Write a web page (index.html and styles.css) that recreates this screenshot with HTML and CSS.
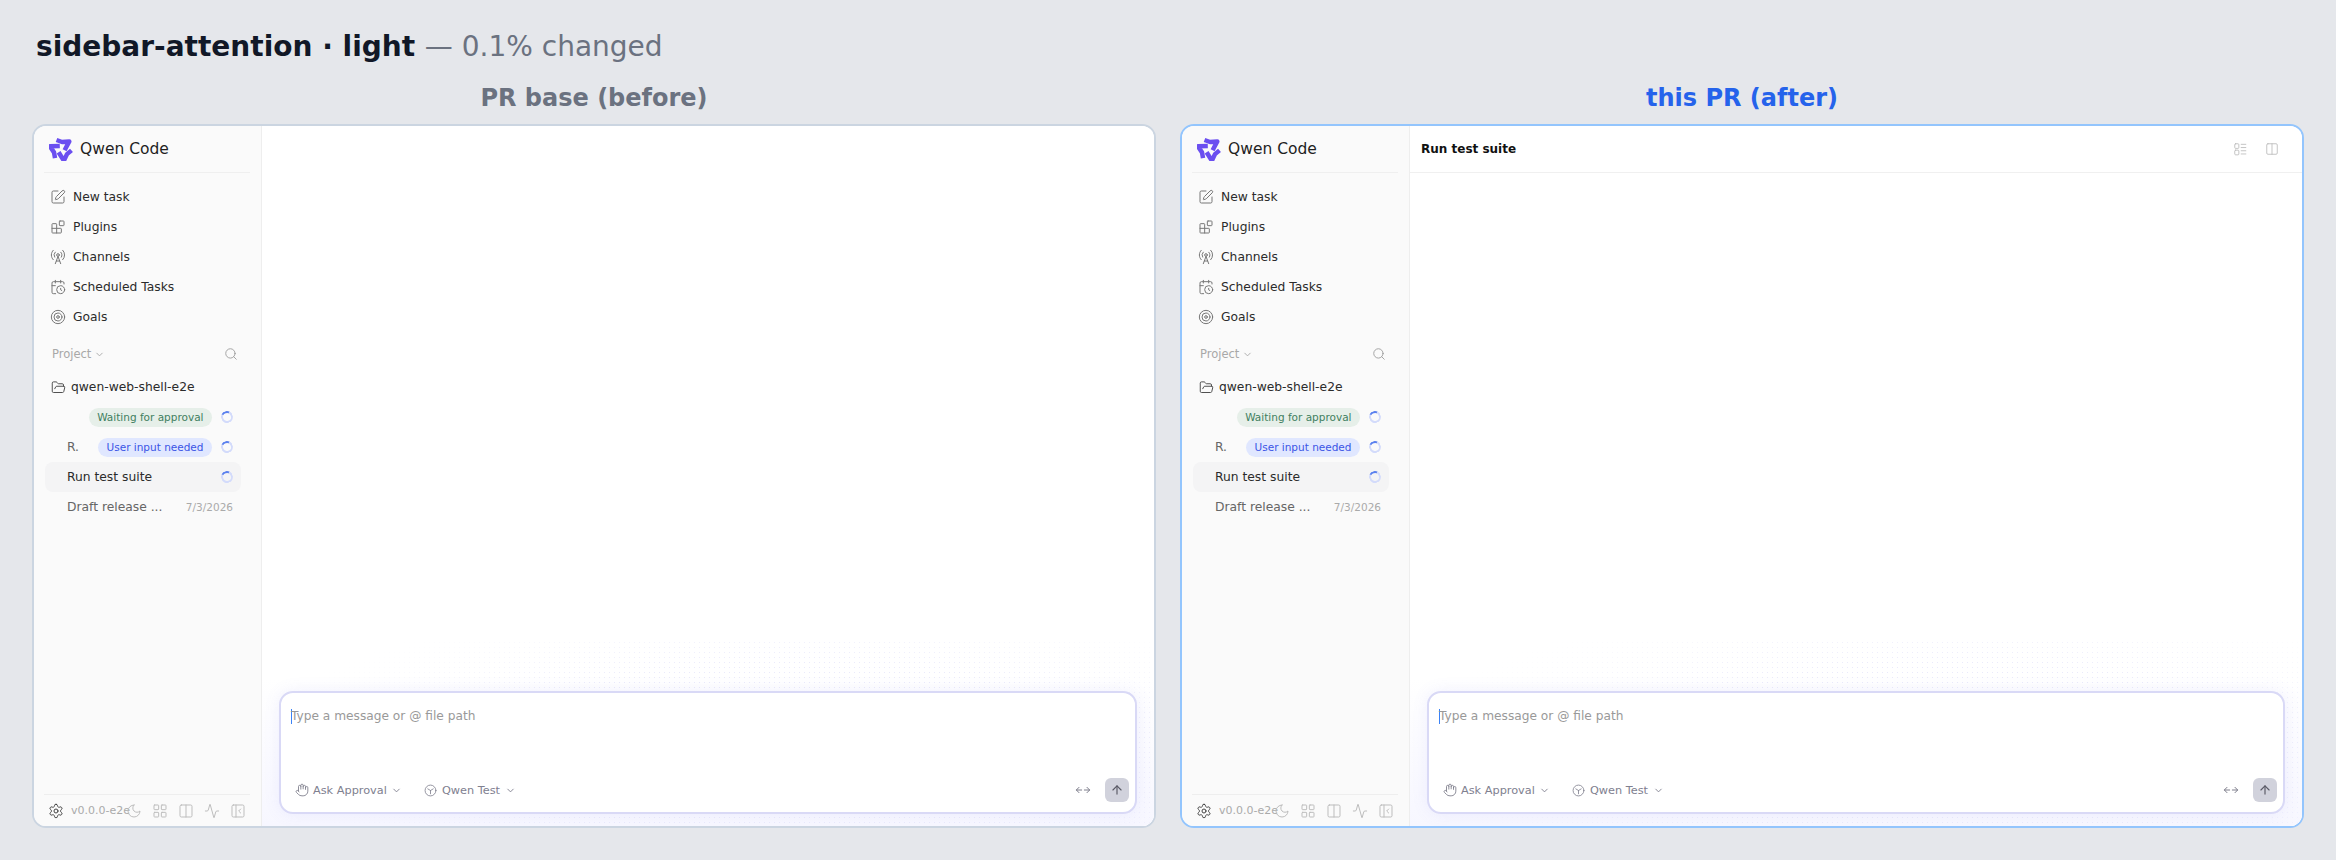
FILE: index.html
```html
<!DOCTYPE html>
<html lang="en">
<head>
<meta charset="utf-8">
<title>sidebar-attention · light</title>
<link rel="stylesheet" href="styles.css">
</head>
<body>
<svg class="sprite" aria-hidden="true">
  <defs>
    <symbol id="i-pen" viewBox="0 0 24 24"><path d="M12 3H5a2 2 0 0 0-2 2v14a2 2 0 0 0 2 2h14a2 2 0 0 0 2-2v-7"/><path d="M18.375 2.625a1 1 0 0 1 3 3l-9.013 9.014a2 2 0 0 1-.853.505l-2.873.84a.5.5 0 0 1-.62-.62l.84-2.873a2 2 0 0 1 .506-.852z"/></symbol>
    <symbol id="i-blocks" viewBox="0 0 24 24"><rect x="14" y="3" width="7" height="7" rx="1"/><path d="M10 21V8a1 1 0 0 0-1-1H4a1 1 0 0 0-1 1v12a1 1 0 0 0 1 1h12a1 1 0 0 0 1-1v-5a1 1 0 0 0-1-1H3"/></symbol>
    <symbol id="i-tower" viewBox="0 0 24 24"><path d="M4.9 16.1C1 12.2 1 5.8 4.9 1.9"/><path d="M7.8 4.7a6.14 6.14 0 0 0-.8 7.5"/><circle cx="12" cy="9" r="2"/><path d="M16.2 4.8c2 2 2.26 5.11.8 7.47"/><path d="M19.1 1.9a9.96 9.96 0 0 1 0 14.1"/><path d="M9.5 18h5"/><path d="m8 22 4-11 4 11"/></symbol>
    <symbol id="i-cal" viewBox="0 0 24 24"><path d="M16 14v2.2l1.6 1"/><path d="M16 2v4"/><path d="M21 7.5V6a2 2 0 0 0-2-2H5a2 2 0 0 0-2 2v14a2 2 0 0 0 2 2h3.5"/><path d="M3 10h5"/><path d="M8 2v4"/><circle cx="16" cy="16" r="6"/></symbol>
    <symbol id="i-target" viewBox="0 0 24 24"><circle cx="12" cy="12" r="10"/><circle cx="12" cy="12" r="6"/><circle cx="12" cy="12" r="2"/></symbol>
    <symbol id="i-search" viewBox="0 0 24 24"><circle cx="11" cy="11" r="8"/><path d="m21 21-4.3-4.3"/></symbol>
    <symbol id="i-chev" viewBox="0 0 24 24"><path d="m6 9 6 6 6-6"/></symbol>
    <symbol id="i-folder" viewBox="0 0 24 24"><path d="m6 14 1.5-2.9A2 2 0 0 1 9.24 10H20a2 2 0 0 1 1.94 2.5l-1.54 6a2 2 0 0 1-1.95 1.5H4a2 2 0 0 1-2-2V5a2 2 0 0 1 2-2h3.9a2 2 0 0 1 1.69.9l.81 1.2a2 2 0 0 0 1.67.9H18a2 2 0 0 1 2 2v2"/></symbol>
    <symbol id="i-gear" viewBox="0 0 24 24"><path d="M12.22 2h-.44a2 2 0 0 0-2 2v.18a2 2 0 0 1-1 1.73l-.43.25a2 2 0 0 1-2 0l-.15-.08a2 2 0 0 0-2.73.73l-.22.38a2 2 0 0 0 .73 2.73l.15.1a2 2 0 0 1 1 1.72v.51a2 2 0 0 1-1 1.74l-.15.09a2 2 0 0 0-.73 2.73l.22.38a2 2 0 0 0 2.73.73l.15-.08a2 2 0 0 1 2 0l.43.25a2 2 0 0 1 1 1.73V20a2 2 0 0 0 2 2h.44a2 2 0 0 0 2-2v-.18a2 2 0 0 1 1-1.73l.43-.25a2 2 0 0 1 2 0l.15.08a2 2 0 0 0 2.73-.73l.22-.39a2 2 0 0 0-.73-2.73l-.15-.08a2 2 0 0 1-1-1.74v-.5a2 2 0 0 1 1-1.74l.15-.09a2 2 0 0 0 .73-2.73l-.22-.38a2 2 0 0 0-2.73-.73l-.15.08a2 2 0 0 1-2 0l-.43-.25a2 2 0 0 1-1-1.73V4a2 2 0 0 0-2-2z"/><circle cx="12" cy="12" r="3"/></symbol>
    <symbol id="i-moon" viewBox="0 0 24 24"><path d="M12 3a6 6 0 0 0 9 9 9 9 0 1 1-9-9Z"/></symbol>
    <symbol id="i-grid" viewBox="0 0 24 24"><rect x="3" y="3" width="7" height="7" rx="1"/><rect x="14" y="3" width="7" height="7" rx="1"/><rect x="14" y="14" width="7" height="7" rx="1"/><rect x="3" y="14" width="7" height="7" rx="1"/></symbol>
    <symbol id="i-cols" viewBox="0 0 24 24"><rect x="3" y="3" width="18" height="18" rx="2"/><path d="M12 3v18"/></symbol>
    <symbol id="i-activity" viewBox="0 0 24 24"><path d="M22 12h-2.48a2 2 0 0 0-1.93 1.46l-2.35 8.36a.25.25 0 0 1-.48 0L9.24 2.18a.25.25 0 0 0-.48 0l-2.35 8.36A2 2 0 0 1 4.49 12H2"/></symbol>
    <symbol id="i-panel" viewBox="0 0 24 24"><rect x="3" y="3" width="18" height="18" rx="2"/><path d="M9 3v18"/><path d="m16 15-3-3 3-3"/></symbol>
    <symbol id="i-hand" viewBox="0 0 24 24"><path d="M18 11V6a2 2 0 0 0-2-2a2 2 0 0 0-2 2"/><path d="M14 10V4a2 2 0 0 0-2-2a2 2 0 0 0-2 2v2"/><path d="M10 10.5V6a2 2 0 0 0-2-2a2 2 0 0 0-2 2v8"/><path d="M18 8a2 2 0 1 1 4 0v6a8 8 0 0 1-8 8h-2c-2.8 0-4.5-.86-5.99-2.34l-3.6-3.6a2 2 0 0 1 2.83-2.82L7 15"/></symbol>
    <symbol id="i-model" viewBox="0 0 24 24"><circle cx="12" cy="12" r="10"/><path d="M7 9 12 12l5-3M12 12v6"/></symbol>
    <symbol id="i-move" viewBox="0 0 24 24"><path d="m6 8-4 4 4 4"/><path d="M2 12h8"/><path d="M14 12h8"/><path d="m18 8 4 4-4 4"/></symbol>
    <symbol id="i-up" viewBox="0 0 24 24"><path d="m5 12 7-7 7 7"/><path d="M12 19V5"/></symbol>
    <symbol id="i-list" viewBox="0 0 24 24"><rect x="3" y="3" width="7" height="8" rx="1.5"/><rect x="3" y="14" width="7" height="8" rx="1.500"/><path d="M14 4h8"/><path d="M14 9.500h8"/><path d="M14 15h8"/><path d="M14 20.500h8"/></symbol>
    <symbol id="i-logo" viewBox="0 0 24 24">
      <path class="logo-arm" d="M7.500 3 13 5 20.300 4.400 15.600 13.200"/>
      <path class="logo-arm" d="M7.500 3 13 5 20.300 4.400 15.600 13.200" transform="rotate(120 12 12.500)"/>
      <path class="logo-arm" d="M7.500 3 13 5 20.300 4.400 15.600 13.200" transform="rotate(240 12 12.500)"/>
    </symbol>
  </defs>
</svg>

<h1 class="title">sidebar-attention · light <span class="title-note">— 0.1% changed</span></h1>

<div class="compare">
  <section class="side">
    <h2 class="side-label side-label-base">PR base (before)</h2>
    <div class="frame frame-base">
      <aside class="sidebar">
        <div class="brand"><svg class="logo"><use href="#i-logo"/></svg><span>Qwen Code</span></div>
        <nav class="nav">
          <a class="nav-item"><svg class="ico"><use href="#i-pen"/></svg>New task</a>
          <a class="nav-item"><svg class="ico"><use href="#i-blocks"/></svg>Plugins</a>
          <a class="nav-item"><svg class="ico"><use href="#i-tower"/></svg>Channels</a>
          <a class="nav-item"><svg class="ico"><use href="#i-cal"/></svg>Scheduled Tasks</a>
          <a class="nav-item"><svg class="ico"><use href="#i-target"/></svg>Goals</a>
        </nav>
        <div class="section-head"><span class="section-title">Project <svg class="chev"><use href="#i-chev"/></svg></span><svg class="ico ico-search"><use href="#i-search"/></svg></div>
        <div class="project"><svg class="ico ico-dark ico-folder"><use href="#i-folder"/></svg>qwen-web-shell-e2e</div>
        <div class="session"><span class="session-name"></span><span class="badge badge-green">Waiting for approval</span><span class="spinner"></span></div>
        <div class="session"><span class="session-name">R.</span><span class="badge badge-blue">User input needed</span><span class="spinner"></span></div>
        <div class="session session-active"><span class="session-name">Run test suite</span><span class="spinner"></span></div>
        <div class="session"><span class="session-name">Draft release ...</span><span class="session-date">7/3/2026</span></div>
        <div class="side-foot">
          <svg class="ico ico-dark"><use href="#i-gear"/></svg>
          <span class="version">v0.0.0-e2e</span>
          <svg class="ico ico-light ico-moon"><use href="#i-moon"/></svg>
          <svg class="ico ico-light"><use href="#i-grid"/></svg>
          <svg class="ico ico-light"><use href="#i-cols"/></svg>
          <svg class="ico ico-light"><use href="#i-activity"/></svg>
          <svg class="ico ico-light"><use href="#i-panel"/></svg>
        </div>
      </aside>
      <main class="main">
        <div class="main-body"></div>
        <div class="composer-zone">
          <div class="composer">
            <div class="prompt"><span class="caret"></span>Type a message or @ file path</div>
            <div class="tools">
              <span class="tool"><svg class="ico ico-tool ico-hand"><use href="#i-hand"/></svg>Ask Approval<svg class="chev chev-tool"><use href="#i-chev"/></svg></span>
              <span class="tool tool-model"><svg class="ico ico-tool ico-small"><use href="#i-model"/></svg>Qwen Test<svg class="chev chev-tool"><use href="#i-chev"/></svg></span>
              <svg class="ico ico-tool ico-move"><use href="#i-move"/></svg>
              <span class="send"><svg class="ico ico-send"><use href="#i-up"/></svg></span>
            </div>
          </div>
        </div>
      </main>
    </div>
  </section>

  <section class="side">
    <h2 class="side-label side-label-pr">this PR (after)</h2>
    <div class="frame frame-pr">
      <aside class="sidebar">
        <div class="brand"><svg class="logo"><use href="#i-logo"/></svg><span>Qwen Code</span></div>
        <nav class="nav">
          <a class="nav-item"><svg class="ico"><use href="#i-pen"/></svg>New task</a>
          <a class="nav-item"><svg class="ico"><use href="#i-blocks"/></svg>Plugins</a>
          <a class="nav-item"><svg class="ico"><use href="#i-tower"/></svg>Channels</a>
          <a class="nav-item"><svg class="ico"><use href="#i-cal"/></svg>Scheduled Tasks</a>
          <a class="nav-item"><svg class="ico"><use href="#i-target"/></svg>Goals</a>
        </nav>
        <div class="section-head"><span class="section-title">Project <svg class="chev"><use href="#i-chev"/></svg></span><svg class="ico ico-search"><use href="#i-search"/></svg></div>
        <div class="project"><svg class="ico ico-dark ico-folder"><use href="#i-folder"/></svg>qwen-web-shell-e2e</div>
        <div class="session"><span class="session-name"></span><span class="badge badge-green">Waiting for approval</span><span class="spinner"></span></div>
        <div class="session"><span class="session-name">R.</span><span class="badge badge-blue">User input needed</span><span class="spinner"></span></div>
        <div class="session session-active"><span class="session-name">Run test suite</span><span class="spinner"></span></div>
        <div class="session"><span class="session-name">Draft release ...</span><span class="session-date">7/3/2026</span></div>
        <div class="side-foot">
          <svg class="ico ico-dark"><use href="#i-gear"/></svg>
          <span class="version">v0.0.0-e2e</span>
          <svg class="ico ico-light ico-moon"><use href="#i-moon"/></svg>
          <svg class="ico ico-light"><use href="#i-grid"/></svg>
          <svg class="ico ico-light"><use href="#i-cols"/></svg>
          <svg class="ico ico-light"><use href="#i-activity"/></svg>
          <svg class="ico ico-light"><use href="#i-panel"/></svg>
        </div>
      </aside>
      <main class="main">
        <header class="main-head">
          <span class="main-title">Run test suite</span>
          <svg class="ico ico-light ico-head"><use href="#i-list"/></svg>
          <svg class="ico ico-light ico-head"><use href="#i-cols"/></svg>
        </header>
        <div class="main-body"></div>
        <div class="composer-zone">
          <div class="composer">
            <div class="prompt"><span class="caret"></span>Type a message or @ file path</div>
            <div class="tools">
              <span class="tool"><svg class="ico ico-tool ico-hand"><use href="#i-hand"/></svg>Ask Approval<svg class="chev chev-tool"><use href="#i-chev"/></svg></span>
              <span class="tool tool-model"><svg class="ico ico-tool ico-small"><use href="#i-model"/></svg>Qwen Test<svg class="chev chev-tool"><use href="#i-chev"/></svg></span>
              <svg class="ico ico-tool ico-move"><use href="#i-move"/></svg>
              <span class="send"><svg class="ico ico-send"><use href="#i-up"/></svg></span>
            </div>
          </div>
        </div>
      </main>
    </div>
  </section>
</div>
</body>
</html>
```
FILE: styles.css
```css
* { box-sizing: border-box; }
html, body { margin: 0; height: 100%; }
body {
  background: #e5e7eb;
  font-family: "DejaVu Sans", sans-serif;
  padding: 29px 32px 0;
  overflow: hidden;
}
.sprite { width: 0; height: 0; display: block; }
.title {
  margin: 0 0 0 4px;
  font-size: 28px;
  line-height: 36px;
  font-weight: 700;
  color: #111827;
  height: 36px;
}
.title-note { font-weight: 400; color: #6b7280; }
.compare { display: flex; gap: 24px; }
.side { flex: 0 0 1124px; }
.side-label {
  margin: 0;
  height: 59px;
  padding-top: 21px;
  line-height: 24px;
  text-align: center;
  font-size: 24px;
  font-weight: 700;
}
.side-label-base { color: #6b7280; }
.side-label-pr { color: #2563eb; }
.frame {
  height: 704px;
  border: 2px solid #cbd5e1;
  border-radius: 14px;
  overflow: hidden;
  display: flex;
  background: #fff;
}
.frame-pr { border-color: #93c5fd; }

.sidebar {
  flex: 0 0 228px;
  min-width: 0;
  background: #fafafa;
  border-right: 1px solid #eeeeee;
  display: flex;
  flex-direction: column;
  padding: 0 10px;
}
.brand {
  height: 47px;
  flex: none;
  margin: 0 1px 0 0;
  padding-left: 5px;
  display: flex;
  align-items: center;
  gap: 7px;
  font-size: 15.5px;
  color: #1f1f1f;
  border-bottom: 1px solid #efefef;
}
.logo { width: 24px; height: 24px; flex: none; }
.logo-arm {
  fill: none;
  stroke: #6b4ff0;
  stroke-width: 4.500;
  stroke-linejoin: round;
}

.nav { display: flex; flex-direction: column; padding-top: 9px; }
.nav-item {
  height: 30px;
  display: flex;
  align-items: center;
  gap: 7px;
  padding-left: 6px;
  font-size: 12.3px;
  color: #2b2b2b;
}
.ico {
  width: 16px;
  height: 16px;
  flex: none;
  fill: none;
  stroke: #777;
  stroke-width: 1.500;
  stroke-linecap: round;
  stroke-linejoin: round;
}
.ico-dark { stroke: #444; }
.ico-light { stroke: #bdbdbd; }
.section-head {
  margin-top: 10px;
  height: 24px;
  padding: 0 13px 0 8px;
  display: flex;
  align-items: center;
  justify-content: space-between;
  font-size: 11.5px;
  color: #a8a8a8;
}
.section-title { display: flex; align-items: center; gap: 3px; }
.chev {
  width: 11px;
  height: 11px;
  fill: none;
  stroke: #a8a8a8;
  stroke-width: 2;
  stroke-linecap: round;
  stroke-linejoin: round;
}
.ico-search { width: 14px; height: 14px; stroke: #999; }
.project {
  margin-top: 6px;
  height: 30px;
  padding-left: 7px;
  display: flex;
  align-items: center;
  gap: 5px;
  font-size: 12.3px;
  color: #2b2b2b;
}
.ico-folder { width: 15px; height: 15px; }
.session {
  height: 30px;
  width: 196px;
  padding: 0 8px 0 22px;
  margin-left: 1px;
  display: flex;
  align-items: center;
  font-size: 12.3px;
  color: #666;
  border-radius: 8px;
}
.session-name { flex: 1; min-width: 0; white-space: nowrap; }
.session-active { background: #f4f4f5; color: #2b2b2b; }
.session-date { flex: none; font-size: 10.500px; color: #aaa; }
.badge {
  flex: none;
  height: 19px;
  line-height: 19px;
  padding: 0 8.500px;
  font-size: 10.500px;
  border-radius: 10px;
  white-space: nowrap;
}
.badge-green { background: #e6efe9; color: #3f8060; }
.badge-blue { background: #e0e7ff; color: #3b55e6; }
.spinner {
  flex: none;
  width: 12px;
  height: 12px;
  margin-left: 9px;
  border-radius: 50%;
  border: 2px solid #d3dbfb;
  border-top-color: #5a80ee;
  transform: rotate(-20deg);
}
.side-foot {
  margin: auto 1px 0 0;
  height: 32px;
  flex: none;
  border-top: 1px solid #eeeeee;
  display: flex;
  align-items: center;
  padding-left: 4px;
  font-size: 11px;
  color: #aaa;
  gap: 10px;
}
.version { width: 57px; margin-left: -3px; white-space: nowrap; flex: none; }
.ico-moon { margin-left: -12px; }

.main { flex: 1; min-width: 0; display: flex; flex-direction: column; background: #fff; }
.main-head {
  flex: none;
  height: 47px;
  border-bottom: 1px solid #f0f0f0;
  display: flex;
  align-items: center;
  padding: 0 23px 0 11px;
  gap: 18px;
}
.main-title { flex: 1; font-size: 12px; font-weight: 700; color: #111; }
.ico-head { width: 14px; height: 14px; }
.main-body { flex: 1; }
.composer-zone {
  flex: none;
  height: 186px;
  padding: 51px 17px 12px 17px;
  background:
    linear-gradient(to bottom, rgba(232, 232, 255, 0) 20%, rgba(232, 232, 255, .35)),
    radial-gradient(ellipse 62% 85% at 60% 60%, rgba(255, 255, 255, 0) 55%, #fff 100%),
    radial-gradient(circle, rgba(130, 130, 230, .16) .7px, transparent 1px) 0 0 / 5px 5px,
    #fff;
}
.composer {
  height: 123px;
  background: #fff;
  border: 2px solid #d9d9f6;
  border-radius: 14px;
  box-shadow: 0 0 16px rgba(120, 120, 240, .1);
  padding: 15px 6px 10px 10px;
  display: flex;
  flex-direction: column;
  justify-content: space-between;
}
.prompt {
  font-size: 12.2px;
  line-height: 16px;
  color: #999;
  display: flex;
  align-items: center;
}
.caret { width: 1px; height: 15px; background: #3b82f6; margin-right: -1px; flex: none; }
.tools {
  display: flex;
  align-items: center;
  height: 24px;
  font-size: 11.3px;
  color: #80808f;
}
.tool { display: flex; align-items: center; gap: 4px; margin-left: 4px; }
.tool-model { margin-left: 22px; gap: 5px; }
.ico-hand { width: 14px; height: 14px; }
.ico-tool { stroke: #7e7e8c; }
.ico-small { width: 13px; height: 13px; }
.chev-tool { stroke: #80808f; }
.ico-move { margin-left: auto; }
.send {
  width: 24px;
  height: 24px;
  margin-left: 14px;
  border-radius: 6px;
  background: #d1d2dc;
  display: flex;
  align-items: center;
  justify-content: center;
}
.ico-send { width: 14px; height: 14px; stroke: #5a5a66; stroke-width: 2; }
```
